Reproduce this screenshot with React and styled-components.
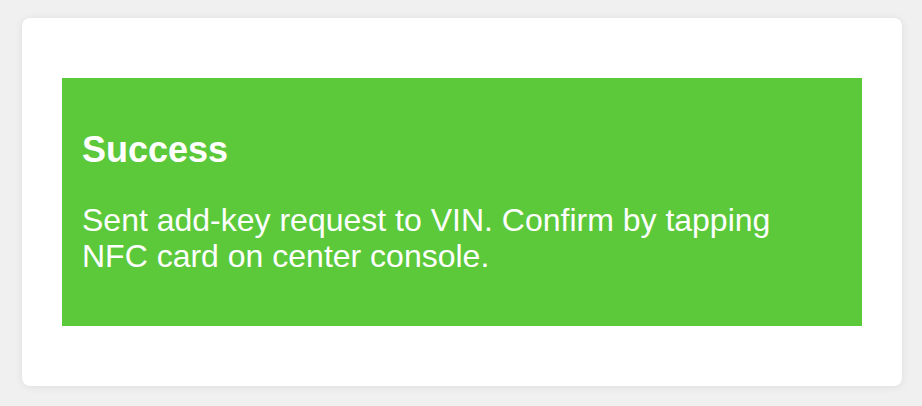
import React from 'react'
import styled, { createGlobalStyle } from 'styled-components'

const GlobalStyle = createGlobalStyle`
    html, body {
        margin: 0;
        background: #f0f0f0;
        font-family: "Liberation Sans", Arial, Helvetica, sans-serif;
    }
`

const Page = styled.div`
    padding: 18px 20px 20px 22px;
`

const Card = styled.div`
    width: 880px;
    box-sizing: border-box;
    padding: 60px 40px;
    background: #fff;
    border-radius: 8px;
    box-shadow: 0 1px 8px rgba(0, 0, 0, 0.08);
`

const Alert = styled.div`
    background: ${(p) => (p.kind === 'success' ? '#5cc93b' : '#e5533d')};
    color: #fff;
    height: 248px;
    box-sizing: border-box;
    padding: 51px 20px 0;
`

const Title = styled.h2`
    margin: 0 0 32px;
    font-size: 36px;
    font-weight: 700;
    line-height: 41px;
`

const Message = styled.p`
    margin: 0;
    font-size: 32px;
    line-height: 36px;
`

const App = () => (
    <Page>
        <GlobalStyle />
        <Card>
            <Alert kind="success">
                <Title>Success</Title>
                <Message>Sent add-key request to VIN. Confirm by tapping NFC card on center console.</Message>
            </Alert>
        </Card>
    </Page>
)

export default App
